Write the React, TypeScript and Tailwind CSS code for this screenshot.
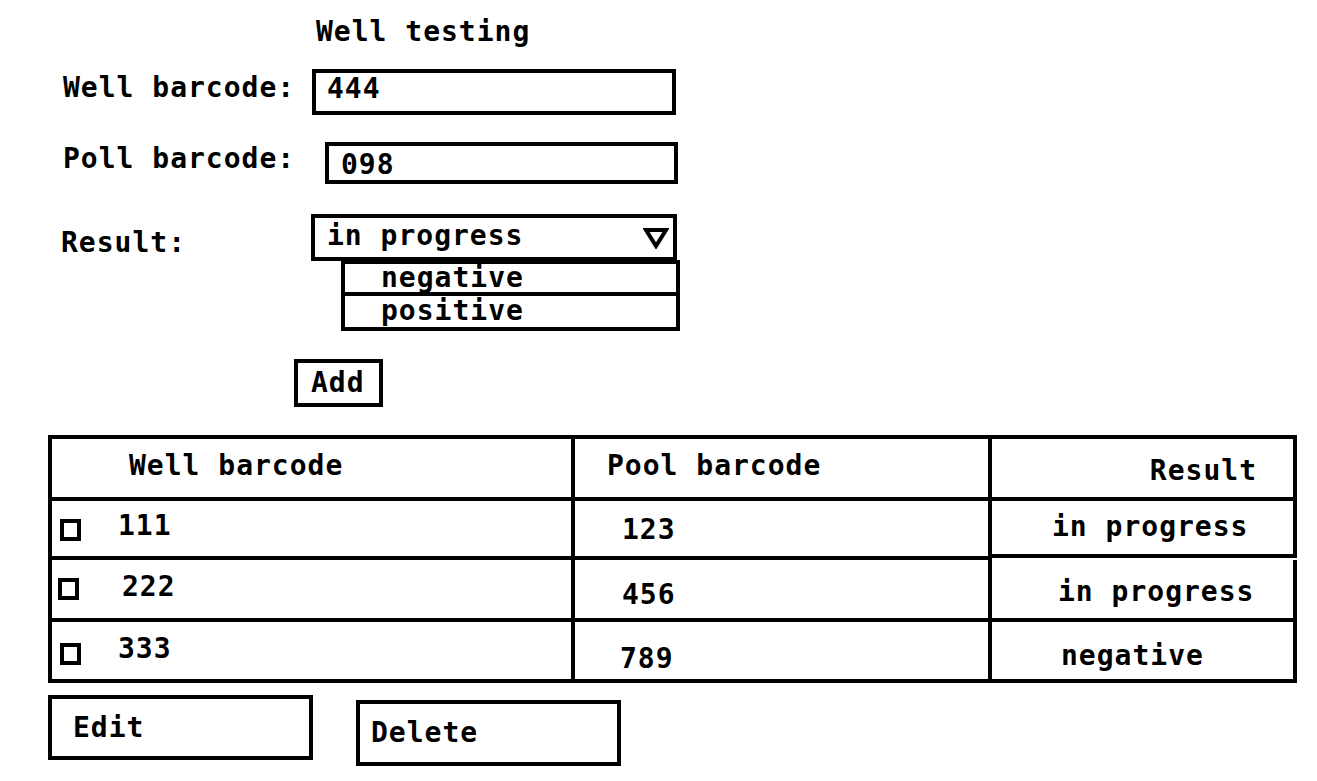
import React from "react";

type Row = {
    well: string;
    pool: string;
    result: string;
    h: string;
    boxPad: string;
    wellGap: string;
    poolCls: string;
    resultCls: string;
};

const rows: Row[] = [
    { well: "111", pool: "123", result: "in progress", h: "h-[59px]", boxPad: "pl-[8px] pt-[2px]", wellGap: "ml-[37px] -mt-[8px]", poolCls: "pl-[47px] pt-[2px]", resultCls: "pl-[60px] -mt-[2px]" },
    { well: "222", pool: "456", result: "in progress", h: "h-[62px]", boxPad: "pl-[6px] pt-[0px]", wellGap: "ml-[43px] -mt-[4px]", poolCls: "pl-[47px] pt-[12px]", resultCls: "pl-[66px] pt-[6px]" },
    { well: "333", pool: "789", result: "negative", h: "h-[61px]", boxPad: "pl-[8px] pt-[6px]", wellGap: "ml-[37px] -mt-[10px]", poolCls: "pl-[45px] pt-[16px]", resultCls: "pl-[69px] pt-[10px]" },
];

function DropTriangle() {
    return (
        <svg width="26" height="22" viewBox="0 0 26 22" className="shrink-0">
            <polygon points="3,3 23,3 13,19" fill="white" stroke="black" strokeWidth="4" strokeLinejoin="miter" />
        </svg>
    );
}

export default function App() {
    return (
        <div className="min-h-screen bg-white text-black font-bold text-[28px] leading-[30px] tracking-[1px] font-['DejaVu_Sans_Mono',monospace] pl-[48px] pt-[17px]">
            {/* Form */}
            <h1 className="ml-[268px] h-[30px]">Well testing</h1>

            <div className="mt-[22px] flex items-center h-[46px]">
                <label className="ml-[15px] w-[249px] -mt-[8px]">Well barcode:</label>
                <div className="w-[364px] h-[46px] border-4 border-black pl-[11px] flex items-start pt-[1px]">444</div>
            </div>

            <div className="mt-[27px] flex items-center h-[42px]">
                <label className="ml-[15px] w-[262px] -mt-[8px]">Poll barcode:</label>
                <div className="w-[353px] h-[42px] border-4 border-black pl-[12px] flex items-center pt-[4px]">098</div>
            </div>

            <div className="mt-[30px] flex items-center h-[47px]">
                <label className="ml-[13px] w-[250px] pt-[10px]">Result:</label>
                <div className="w-[366px] h-[47px] border-4 border-black pl-[12px] pr-[4px] flex items-center justify-between">
                    <span className="-mt-[4px]">in progress</span>
                    <DropTriangle />
                </div>
            </div>
            <div className="ml-[293px] -mt-[1px] w-[339px] border-4 border-black">
                <div className="h-[32px] border-b-4 border-black pl-[36px] leading-[28px]">negative</div>
                <div className="h-[31px] pl-[36px] leading-[30px]">positive</div>
            </div>

            <button className="mt-[28px] ml-[246px] w-[89px] h-[48px] border-4 border-black pl-[13px] text-left">Add</button>

            {/* Table */}
            <div className="mt-[28px] w-[1249px] border-l-4 border-t-4 border-black grid grid-cols-[523px_417px_305px]">
                <div className="h-[62px] border-r-4 border-b-4 border-black pl-[77px] flex items-center">
                    <span className="-mt-[4px]">Well barcode</span>
                </div>
                <div className="h-[62px] border-r-4 border-b-4 border-black pl-[32px] flex items-center">
                    <span className="-mt-[4px]">Pool barcode</span>
                </div>
                <div className="h-[62px] border-r-4 border-b-4 border-black pr-[36px] flex items-center justify-end">
                    <span className="pt-[6px]">Result</span>
                </div>

                {rows.map((r) => (
                    <React.Fragment key={r.well}>
                        <div className={`${r.h} border-r-4 border-b-4 border-black flex items-center ${r.boxPad}`}>
                            <span className="w-[21px] h-[22px] border-4 border-black shrink-0" />
                            <span className={r.wellGap}>{r.well}</span>
                        </div>
                        <div className={`${r.h} border-r-4 border-b-4 border-black flex items-center ${r.poolCls}`}>
                            {r.pool}
                        </div>
                        <div className={`${r.h} border-r-4 border-b-4 border-black flex items-center ${r.resultCls}`}>
                            {r.result}
                        </div>
                    </React.Fragment>
                ))}
            </div>

            {/* Actions */}
            <div className="mt-[12px] flex items-start gap-[43px]">
                <button className="w-[265px] h-[65px] border-4 border-black pl-[21px] text-left">Edit</button>
                <button className="mt-[5px] w-[265px] h-[66px] border-4 border-black pl-[11px] text-left">Delete</button>
            </div>
        </div>
    );
}
